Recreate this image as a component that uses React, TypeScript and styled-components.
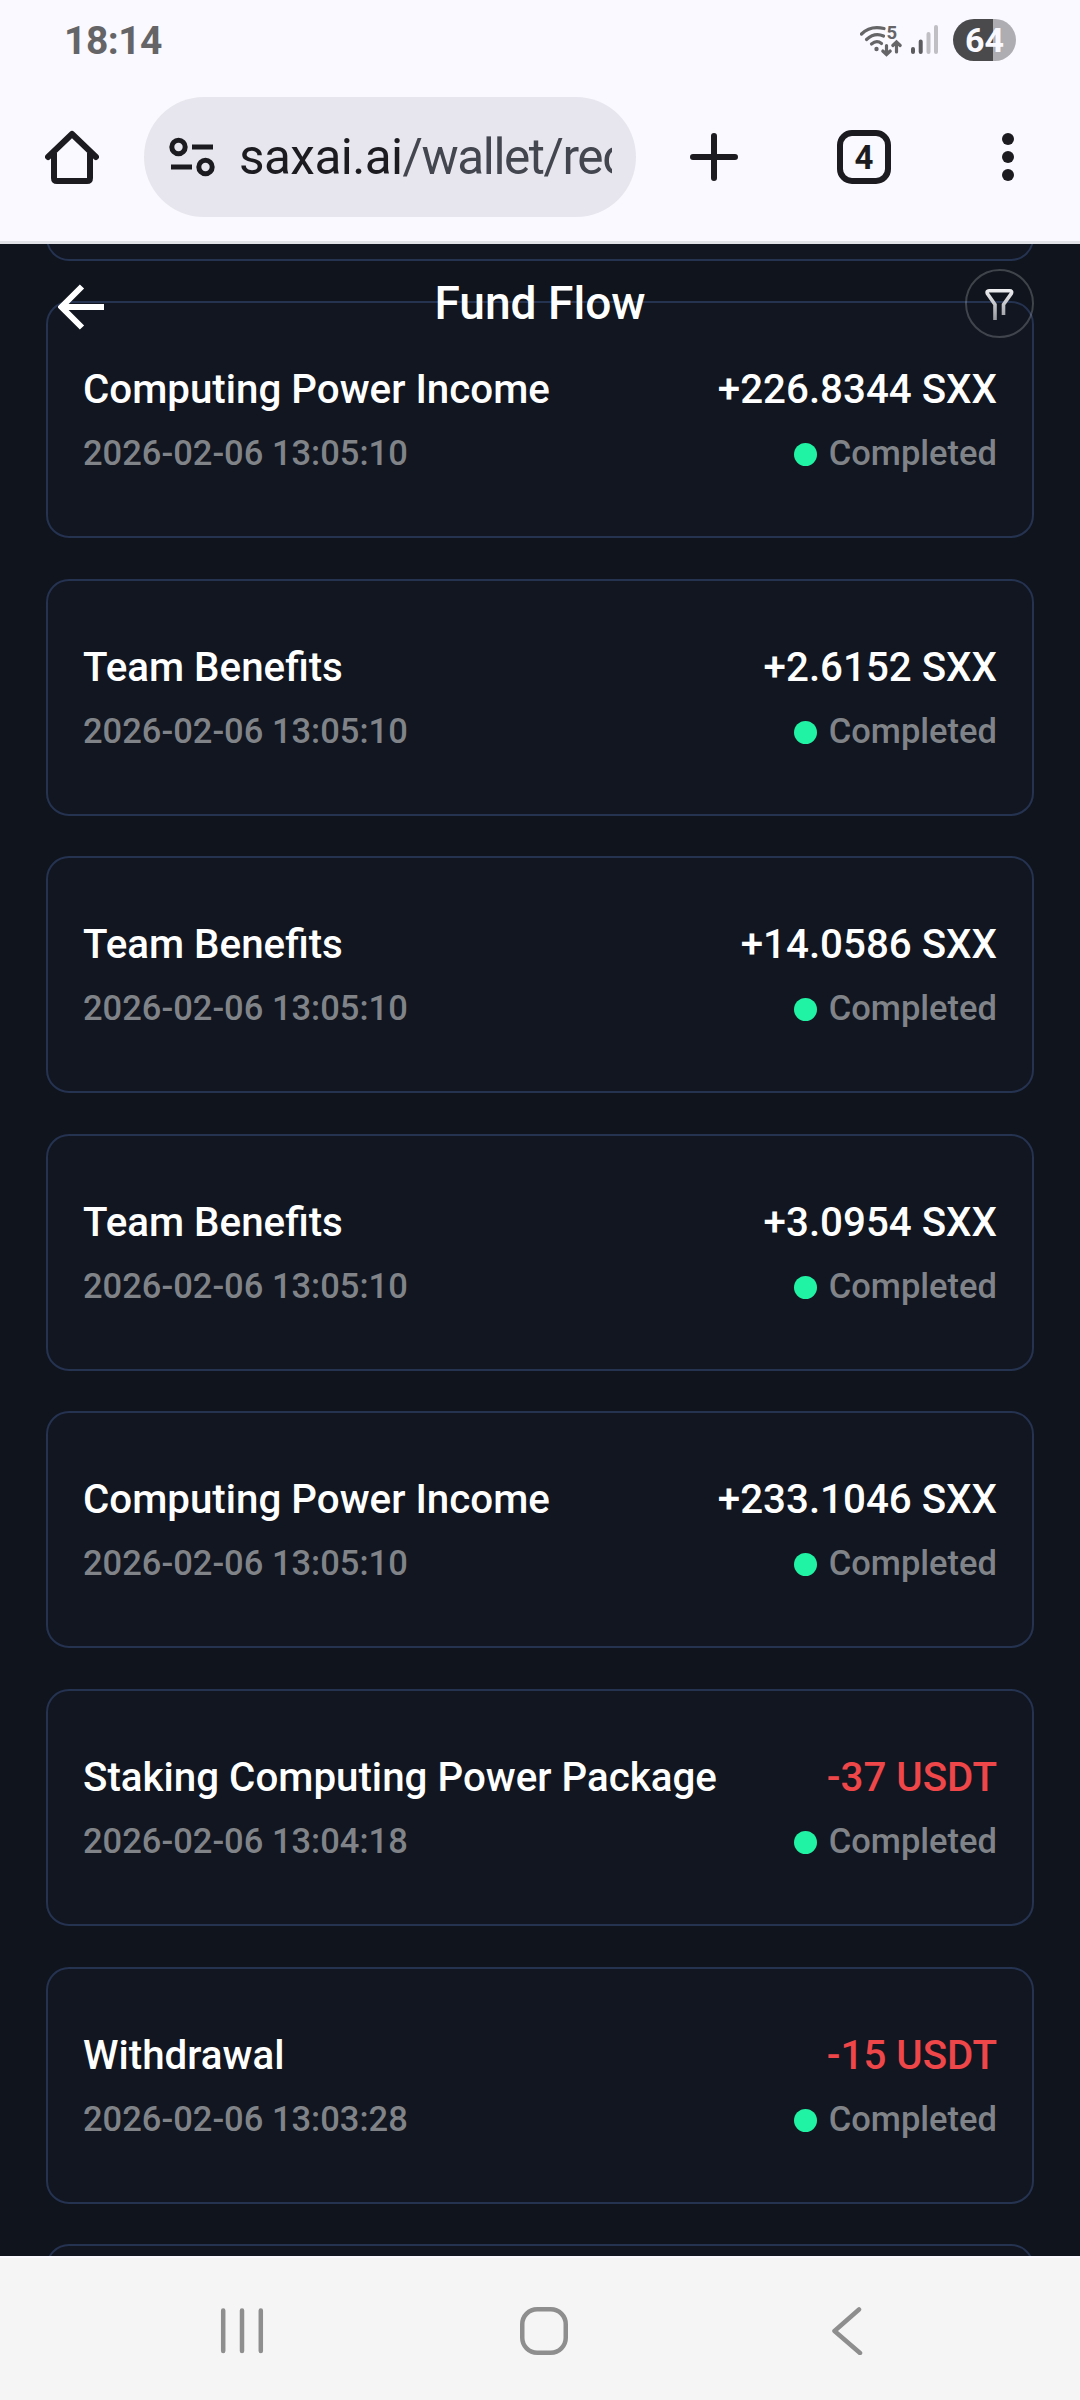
import React from "react";
import styled, { createGlobalStyle } from "styled-components";

const Global = createGlobalStyle`
  * { box-sizing: border-box; }
  html, body { margin: 0; padding: 0; }
  body { background: #0f141d; font-family: Roboto, "Liberation Sans", sans-serif; }
  svg { display: block; flex: none; }
`;

const Screen = styled.div`
  width: 1080px;
  height: 2400px;
  display: flex;
  flex-direction: column;
  overflow: hidden;
`;

const StatusBar = styled.div`
  height: 80px;
  flex: none;
  background: #f9f9ff;
  display: flex;
  justify-content: space-between;
  padding: 0 64px 0 64px;
`;

const Clock = styled.div`
  font-size: 39px;
  font-weight: 700;
  line-height: 82px;
  letter-spacing: -0.5px;
  color: #656567;
`;

const StatusIcons = styled.div`
  display: flex;
  height: 80px;
  align-items: center;
  gap: 14px;
`;

const Battery = styled.div`
  width: 63px;
  height: 42px;
  border-radius: 21px;
  background: linear-gradient(90deg, #4a4a4c 0 40px, #aeadb2 40px);
  color: #f9f9ff;
  font-size: 34px;
  font-weight: 700;
  line-height: 43px;
  text-align: center;
`;

const Toolbar = styled.div`
  height: 164px;
  flex: none;
  background: #f9f9ff;
  border-bottom: 3px solid #e0e2e8;
  display: flex;
  padding: 17px 66px 0 45px;
  align-items: flex-start;
`;

const ToolSlot = styled.div<{ $w: number; $ml?: number }>`
  width: ${(p) => p.$w}px;
  margin-left: ${(p) => p.$ml ?? 0}px;
  height: 120px;
  display: flex;
  align-items: center;
  justify-content: center;
`;

const AddressPill = styled.div`
  width: 492px;
  height: 120px;
  margin-left: 45px;
  border-radius: 60px;
  background: #e7e6ee;
  display: flex;
  align-items: center;
  padding: 0 24px 0 25px;
`;

const Url = styled.div`
  margin-left: 24px;
  width: 373px;
  overflow: hidden;
  white-space: nowrap;
  font-size: 49.5px;
  line-height: 121px;
  letter-spacing: -1.45px;
  color: #43464f;
`;

const Host = styled.span`
  color: #1b1b20;
  letter-spacing: -0.55px;
`;

const TabCount = styled.div`
  width: 54px;
  height: 54px;
  border: 6px solid #1b1b20;
  border-radius: 15px;
  color: #1b1b20;
  font-size: 33px;
  font-weight: 700;
  line-height: 43px;
  text-align: center;
`;

const Page = styled.main`
  position: relative;
  height: 2012px;
  flex: none;
  overflow: hidden;
  background: #0f141d;
  display: flex;
  flex-direction: column;
  justify-content: flex-start;
`;

const PageHeader = styled.header`
  position: absolute;
  inset: 0 0 auto 0;
  height: 119px;
  display: grid;
  grid-template-columns: 69px 1fr 69px;
  align-items: center;
  padding: 0 46px;
`;

const PageTitle = styled.h1`
  margin: 0;
  padding-bottom: 1px;
  font-size: 46.1px;
  line-height: 54px;
  font-weight: 500;
  color: #fff;
  text-align: center;
`;

const BackSlot = styled.div`
  padding: 7px 0 0 12px;
`;

const FilterButton = styled.div`
  width: 69px;
  height: 69px;
  border: 2px solid rgba(255, 255, 255, 0.2);
  border-radius: 50%;
  display: flex;
  align-items: center;
  justify-content: center;
`;

const List = styled.div`
  display: flex;
  flex-direction: column;
  gap: 40.5px;
  padding: 0 46px;
  margin-top: -220.6px;
`;

const Card = styled.article`
  height: 237.1px;
  flex: none;
  border: 2px solid #253250;
  border-radius: 23px;
  background: #111620;
  padding: 64px 35px 0;
  display: flex;
  flex-direction: column;
  gap: 17px;
`;

const Line = styled.div`
  display: flex;
  justify-content: space-between;
  align-items: center;
`;

const Label = styled.div<{ $negative?: boolean }>`
  font-size: 40.3px;
  line-height: 46px;
  font-weight: 500;
  color: ${(p) => (p.$negative ? "#ef4649" : "#fff")};
`;

const Muted = styled.div`
  display: flex;
  align-items: center;
  gap: 12px;
  font-size: 34.5px;
  line-height: 46px;
  font-weight: 500;
  color: #808388;
`;

const Dot = styled.i`
  width: 23px;
  height: 23px;
  border-radius: 50%;
  background: #20f4a4;
  margin-top: 3px;
`;

const NavBar = styled.nav`
  height: 144px;
  flex: none;
  border-top: 2px solid #f9f9ff;
  background: #f5f5f5;
  display: grid;
  grid-template-columns: 46px 48px 32px;
  column-gap: 255px;
  align-items: center;
  padding: 4px 0 0 219px;
`;

const BackKey = styled.svg`
  margin-left: 9px;
`;

type Entry = { name: string; time: string; amount: string };

const T = "2026-02-06 13:05:10";
const entries: Entry[] = [
  { name: "", time: "", amount: "" },
  { name: "Computing Power Income", time: T, amount: "+226.8344 SXX" },
  { name: "Team Benefits", time: T, amount: "+2.6152 SXX" },
  { name: "Team Benefits", time: T, amount: "+14.0586 SXX" },
  { name: "Team Benefits", time: T, amount: "+3.0954 SXX" },
  { name: "Computing Power Income", time: T, amount: "+233.1046 SXX" },
  { name: "Staking Computing Power Package", time: "2026-02-06 13:04:18", amount: "-37 USDT" },
  { name: "Withdrawal", time: "2026-02-06 13:03:28", amount: "-15 USDT" },
  { name: "", time: "", amount: "" },
];

function EntryCard({ name, time, amount }: Entry) {
  if (!name) return <Card />;
  return (
    <Card>
      <Line>
        <Label>{name}</Label>
        <Label $negative={amount.startsWith("-")}>{amount}</Label>
      </Line>
      <Line>
        <Muted>{time}</Muted>
        <Muted>
          <Dot />
          Completed
        </Muted>
      </Line>
    </Card>
  );
}

const ink = "#1b1b20";

export default function App() {
  return (
    <Screen>
      <Global />
      <StatusBar>
        <Clock>18:14</Clock>
        <StatusIcons>
          <svg width="79" height="36" viewBox="860 23 79 36" fill="none" strokeLinecap="round">
            <g stroke="#656567" strokeWidth="3.2">
              <path d="M861.500 35C868 28.500 876 27.500 884 29.500" />
              <path d="M866.500 40.500C872 35.500 878 34.500 883.500 37" />
              <path d="M871.500 45C875 42 878.500 42 881.500 44.500" />
              <path d="M886.500 46.500V55M882.800 52L886.500 55.500L890.200 52" />
              <path d="M896.500 53V43M892.800 46.500L896.500 43L900.200 46.500" />
            </g>
            <circle cx="876.500" cy="50" r="2.200" fill="#656567" />
            <text x="886.500" y="40.300" fontSize="18.500" fontWeight="700" fill="#656567" fontFamily="Roboto, sans-serif">5</text>
            <g strokeWidth="4">
              <path d="M913 50V53M920.700 42.500V53" stroke="#5c5c5e" />
              <path d="M928.500 35V53M936 28V53" stroke="#bfbfc4" />
            </g>
          </svg>
          <Battery>64</Battery>
        </StatusIcons>
      </StatusBar>

      <Toolbar>
        <ToolSlot $w={54}>
          <svg width="54" height="54" viewBox="0 0 54 54" fill="none" stroke={ink} strokeWidth="6">
            <path d="M3 27L27 4L51 27" strokeLinecap="round" strokeLinejoin="round" />
            <path d="M9 23V48Q9 51 12 51H42Q45 51 45 48V23" />
          </svg>
        </ToolSlot>
        <AddressPill>
          <svg width="46" height="40" viewBox="0 0 46 40" fill="none" stroke={ink} strokeWidth="5">
            <circle cx="9.500" cy="10" r="6.700" />
            <path d="M23 10H44M2 30H23" />
            <circle cx="36.500" cy="30" r="6.700" />
          </svg>
          <Url>
            <Host>saxai.ai</Host>/wallet/rec
          </Url>
        </AddressPill>
        <ToolSlot $w={48} $ml={54}>
          <svg width="48" height="48" viewBox="0 0 48 48" stroke={ink} strokeWidth="6" strokeLinecap="round">
            <path d="M24 3V45M3 24H45" />
          </svg>
        </ToolSlot>
        <ToolSlot $w={54} $ml={99}>
          <TabCount>4</TabCount>
        </ToolSlot>
        <ToolSlot $w={12} $ml={111}>
          <svg width="12" height="48" viewBox="0 0 12 48" fill={ink}>
            <circle cx="6" cy="6" r="6" />
            <circle cx="6" cy="24" r="6" />
            <circle cx="6" cy="42" r="6" />
          </svg>
        </ToolSlot>
      </Toolbar>

      <Page>
        <List>
          {entries.map((e, i) => (
            <EntryCard key={i} {...e} />
          ))}
        </List>
        <PageHeader>
          <BackSlot>
            <svg width="46" height="46" viewBox="0 0 46 46" fill="none" stroke="#fff" strokeWidth="6">
              <path d="M24 2.500L3.500 23L24 43.500M4 23H46" />
            </svg>
          </BackSlot>
          <PageTitle>Fund Flow</PageTitle>
          <FilterButton>
            <svg width="29" height="34" viewBox="0 0 29 34" fill="none" stroke="url(#funnel)" strokeWidth="3.600">
              <defs>
                <linearGradient id="funnel" x1="0" y1="2" x2="0" y2="32" gradientUnits="userSpaceOnUse">
                  <stop offset="0" stopColor="#f0f0f2" />
                  <stop offset="1" stopColor="#9a9ca2" />
                </linearGradient>
              </defs>
              <path d="M10 33V17.500L2.300 6.500Q1.500 3.800 4 3.800H24.500Q27.500 3.800 26.300 6.500L18.500 17.500V28" />
            </svg>
          </FilterButton>
        </PageHeader>
      </Page>

      <NavBar>
        <svg width="46" height="48" viewBox="0 0 46 48" stroke="#8e8e8e" strokeWidth="4.500" strokeLinecap="round">
          <path d="M4.200 3.500V44M23 3.500V44M41.800 3.500V44" />
        </svg>
        <svg width="48" height="48" viewBox="0 0 48 48" fill="none" stroke="#8e8e8e" strokeWidth="4.500">
          <rect x="2.250" y="2.250" width="43.500" height="43.500" rx="15" />
        </svg>
        <BackKey width="32" height="48" viewBox="0 0 32 48" fill="none" stroke="#8e8e8e" strokeWidth="4.500" strokeLinecap="round" strokeLinejoin="round">
          <path d="M27 2.500L2.500 24L28 46" />
        </BackKey>
      </NavBar>
    </Screen>
  );
}
